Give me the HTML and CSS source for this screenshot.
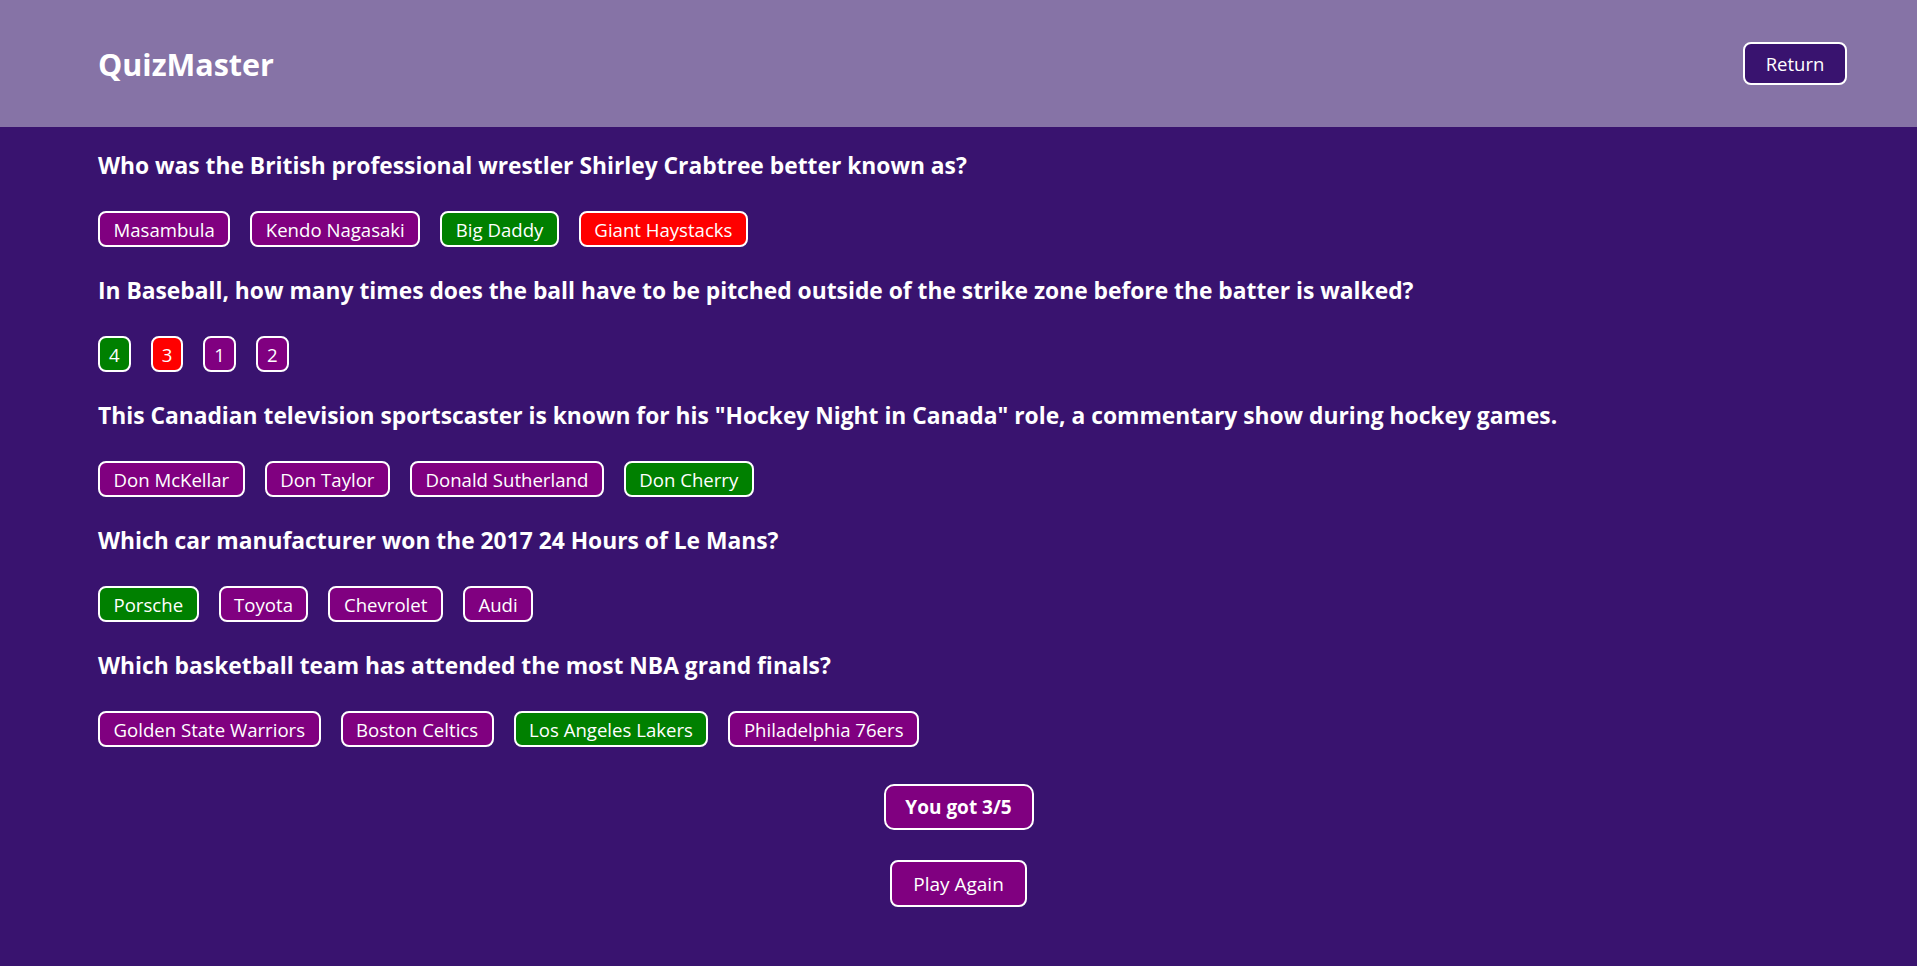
FILE: index.html
```html
<!DOCTYPE html>
<html lang="en">
<head>
<meta charset="utf-8">
<title>QuizMaster</title>
<link rel="stylesheet" href="styles.css">
</head>
<body>
<header class="topbar">
  <div class="brand">QuizMaster</div>
  <button class="return-btn">Return</button>
</header>
<main class="quiz">
  <section class="question">
    <h2 class="q-text">Who was the British professional wrestler Shirley Crabtree better known as?</h2>
    <div class="answers">
      <button class="ans">Masambula</button>
      <button class="ans">Kendo Nagasaki</button>
      <button class="ans correct">Big Daddy</button>
      <button class="ans wrong">Giant Haystacks</button>
    </div>
  </section>
  <section class="question">
    <h2 class="q-text">In Baseball, how many times does the ball have to be pitched outside of the strike zone before the batter is walked?</h2>
    <div class="answers">
      <button class="ans digit correct">4</button>
      <button class="ans digit wrong">3</button>
      <button class="ans digit">1</button>
      <button class="ans digit">2</button>
    </div>
  </section>
  <section class="question">
    <h2 class="q-text">This Canadian television sportscaster is known for his "Hockey Night in Canada" role, a commentary show during hockey games.</h2>
    <div class="answers">
      <button class="ans">Don McKellar</button>
      <button class="ans">Don Taylor</button>
      <button class="ans">Donald Sutherland</button>
      <button class="ans correct">Don Cherry</button>
    </div>
  </section>
  <section class="question">
    <h2 class="q-text">Which car manufacturer won the 2017 24 Hours of Le Mans?</h2>
    <div class="answers">
      <button class="ans correct">Porsche</button>
      <button class="ans">Toyota</button>
      <button class="ans">Chevrolet</button>
      <button class="ans">Audi</button>
    </div>
  </section>
  <section class="question">
    <h2 class="q-text">Which basketball team has attended the most NBA grand finals?</h2>
    <div class="answers">
      <button class="ans">Golden State Warriors</button>
      <button class="ans">Boston Celtics</button>
      <button class="ans correct">Los Angeles Lakers</button>
      <button class="ans">Philadelphia 76ers</button>
    </div>
  </section>
  <div class="result">
    <div class="score">You got 3/5</div>
    <button class="play-again">Play Again</button>
  </div>
</main>
</body>
</html>
```

FILE: styles.css
```css
* {
  box-sizing: border-box;
}

html, body {
  margin: 0;
  padding: 0;
}

body {
  background: #39136f;
  color: #ffffff;
  font-family: "Open Sans", "Liberation Sans", sans-serif;
  min-height: 966px;
}

.topbar {
  height: 127px;
  background: #8673a6;
  display: flex;
  align-items: center;
  justify-content: space-between;
  padding: 0 70px 0 98px;
}

.brand {
  font-size: 30.5px;
  font-weight: 700;
}

.return-btn {
  height: 43px;
  width: 104px;
  background: #39136f;
  color: #ffffff;
  border: 2px solid #ffffff;
  border-radius: 8px;
  font-family: inherit;
  font-size: 18.5px;
  padding: 0;
  cursor: pointer;
}

.quiz {
  padding: 26px 98px 0 98px;
}

.question {
  margin-bottom: 31px;
}

.q-text {
  margin: 0 0 32px;
  font-size: 22.8px;
  line-height: 26px;
  font-weight: 700;
}

.answers {
  display: flex;
  gap: 20px;
}

.ans {
  height: 36px;
  padding: 0 13.5px;
  background: #800080;
  color: #ffffff;
  border: 2px solid #ffffff;
  border-radius: 8px;
  font-family: inherit;
  font-size: 18.6px;
  cursor: pointer;
}

.ans.digit {
  padding: 0 9px;
}

.ans.correct {
  background: #008000;
}

.ans.wrong {
  background: #ff0000;
}

.result {
  display: flex;
  flex-direction: column;
  align-items: center;
  gap: 30px;
  margin-top: 37px;
}

.score {
  height: 46px;
  width: 150px;
  display: flex;
  align-items: center;
  justify-content: center;
  background: #800080;
  border: 2px solid #ffffff;
  border-radius: 10px;
  font-size: 19px;
  font-weight: 700;
}

.play-again {
  height: 47px;
  width: 137px;
  background: #800080;
  color: #ffffff;
  border: 2px solid #ffffff;
  border-radius: 8px;
  font-family: inherit;
  font-size: 19px;
  padding: 0;
  cursor: pointer;
}
```
